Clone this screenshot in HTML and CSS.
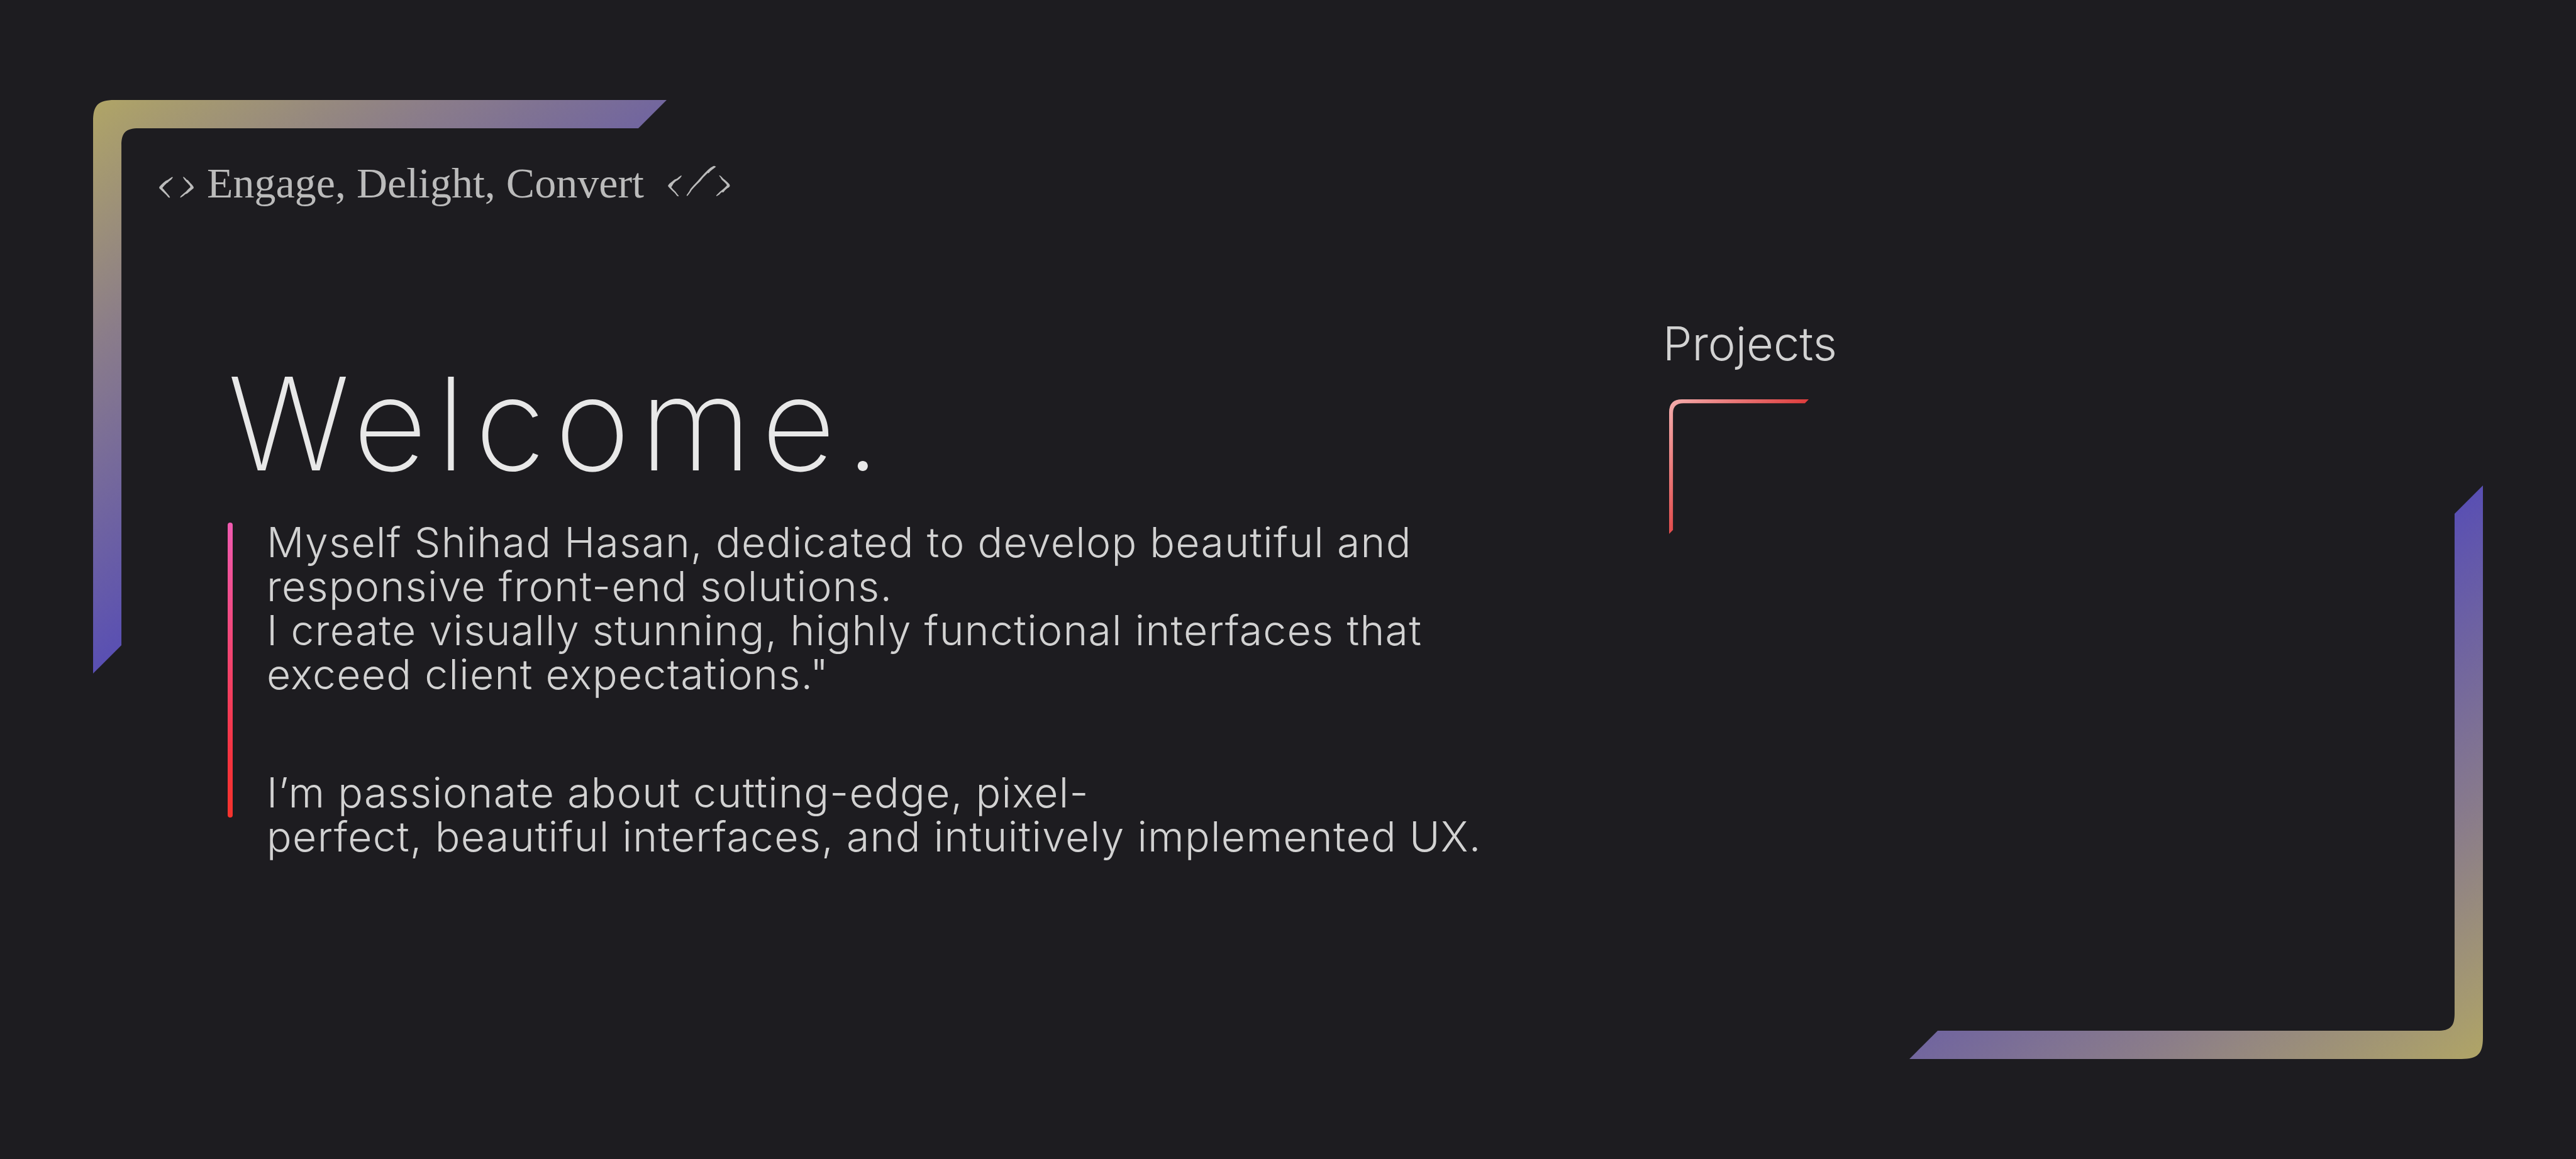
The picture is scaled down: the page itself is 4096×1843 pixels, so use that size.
FILE: index.html
```html
<!DOCTYPE html>
<html lang="en">
<head>
<meta charset="utf-8">
<meta name="viewport" content="width=device-width, initial-scale=1">
<title>Shihad Hasan</title>
<link rel="stylesheet" href="styles.css">
</head>
<body>
<div class="page">
  <svg class="corner corner-start" viewBox="0 0 1336 1336" aria-hidden="true">
    <defs>
      <linearGradient id="frame" gradientUnits="userSpaceOnUse" x1="0" y1="0" x2="628" y2="895">
        <stop offset="0" stop-color="#b0a566"/>
        <stop offset="0.43" stop-color="#8a7c8a"/>
        <stop offset="1" stop-color="#594fb3"/>
      </linearGradient>
    </defs>
    <path id="bracket" fill="url(#frame)" d="M0 1336V50C0 12 12 0 50 0H1336L1270 66H106C76 66 66 76 66 106V1270Z"/>
  </svg>
  <svg class="corner corner-end" viewBox="0 0 1336 1336" aria-hidden="true">
    <use href="#bracket" transform="rotate(180 668 668)"/>
  </svg>

  <div class="content">
    <header class="tagline">
      <svg class="tag-open" viewBox="85 150 252 155" aria-hidden="true">
        <path d="M182 156L186 160L174 176L158 188L150 196L144 199L126 216L112 234L121 243L134 258L149 276L157 285L166 298L162 303L154 300L140 283L121 265L91 236L90 228L100 215L118 198L136 183L151 177L166 165Z"/>
        <path d="M257 158L262 156L273 164L283 176L292 179L306 195L322 212L332 226L332 235L320 245L304 258L287 273L274 277L260 290L241 302L237 299L242 291L263 272L278 260L292 244L310 228L306 217L292 202L277 187L268 175Z"/>
      </svg>
      <p class="motto">Engage, Delight, Convert</p>
      <svg class="tag-close" viewBox="470 78 442 220" aria-hidden="true">
        <path d="M566 148L570 152L558 168L542 181L529 188L512 206L497 231L510 246L526 262L540 280L550 292L545 295L537 291L522 272L504 255L476 227L474 219L484 206L502 191L520 177L537 170L551 158Z"/>
        <path d="M790 83L797 81L810 87L798 97L782 109L768 121L759 132L751 132L741 142L720 163L699 189L677 210L656 232L640 250L629 267L611 290L604 291L605 285L622 261L632 242L652 219L678 191L705 161L728 135L753 110L771 95Z"/>
        <path d="M831 150L837 148L849 158L860 170L874 181L890 196L904 210L907 222L901 231L888 239L873 252L862 266L848 266L832 283L814 294L811 289L818 281L838 262L853 250L867 237L886 219L883 210L868 195L850 178L842 164Z"/>
      </svg>
    </header>

    <main class="columns">
      <section class="intro">
        <h1 class="heading">Welcome.</h1>
        <div class="about">
          <div class="accent"></div>
          <div class="copy">
            <p>Myself Shihad Hasan, dedicated to develop beautiful and<br>responsive front-end solutions.<br>I create visually stunning, highly functional interfaces that<br>exceed client expectations."</p>
            <p>I’m passionate about cutting-edge, pixel-<br>perfect, beautiful interfaces, and intuitively implemented UX.</p>
          </div>
        </div>
      </section>

      <section class="projects">
        <h2 class="subheading">Projects</h2>
        <svg class="project-mark" viewBox="0 0 326 314" aria-hidden="true">
          <defs>
            <linearGradient id="red" gradientUnits="userSpaceOnUse" x1="8" y1="8" x2="190" y2="170">
              <stop offset="0" stop-color="#f3a9a9"/>
              <stop offset="1" stop-color="#dd3838"/>
            </linearGradient>
          </defs>
          <path fill="url(#red)" d="M0 314V30Q0 0 30 0H326L317 9H33Q9 9 9 32V305Z"/>
        </svg>
      </section>
    </main>
  </div>
</div>
</body>
</html>
```
FILE: styles.css
```css
* {
  box-sizing: border-box;
}

body {
  margin: 0;
  background: #1d1c20;
  color: #d2d2d2;
  font-family: Inter, "Liberation Sans", sans-serif;
  font-weight: 300;
}

h1,
h2,
p {
  margin: 0;
  font-weight: inherit;
}

svg {
  display: block;
  flex: none;
}

.page {
  display: grid;
  min-height: 100vh;
  padding: 159px 148px;
}

.corner,
.content {
  grid-area: 1 / 1;
}

.corner {
  width: 912px;
  height: 912px;
}

.corner-end {
  align-self: end;
  justify-self: end;
}

.tagline {
  display: flex;
  align-items: flex-start;
  padding: 92px 0 0 104px;
  color: #bbb;
  fill: #bbb;
}

.tag-open {
  width: 57px;
  height: 35px;
  margin: 29px 20px 0 0;
}

.motto {
  font-family: "Liberation Serif", serif;
  font-size: 68px;
  font-weight: 400;
  line-height: 80px;
}

.tag-close {
  width: 101px;
  height: 50px;
  margin: 12px 0 0 37px;
}

.columns {
  display: grid;
  grid-template-columns: 7fr 4fr;
  padding: 170px 0 0 214px;
}

.intro {
  padding-top: 48px;
}

.heading {
  color: #e8e8e8;
  font-size: 205px;
  font-weight: 200;
  line-height: 248px;
  letter-spacing: 15px;
}

.about {
  display: flex;
  align-items: flex-start;
  gap: 54px;
  padding-top: 30px;
}

.accent {
  width: 8px;
  height: 469px;
  margin-top: 4px;
  border-radius: 4px;
  background: linear-gradient(#f05ab0, #f5333f 80%, #f5332d);
}

.copy {
  display: grid;
  gap: 118px;
  font-size: 66px;
  line-height: 70px;
  letter-spacing: 0.02em;
  white-space: nowrap;
}

.subheading {
  font-size: 74px;
  line-height: 90px;
}

.project-mark {
  width: 222px;
  height: 214px;
  margin: 44px 0 0 10px;
}
```
